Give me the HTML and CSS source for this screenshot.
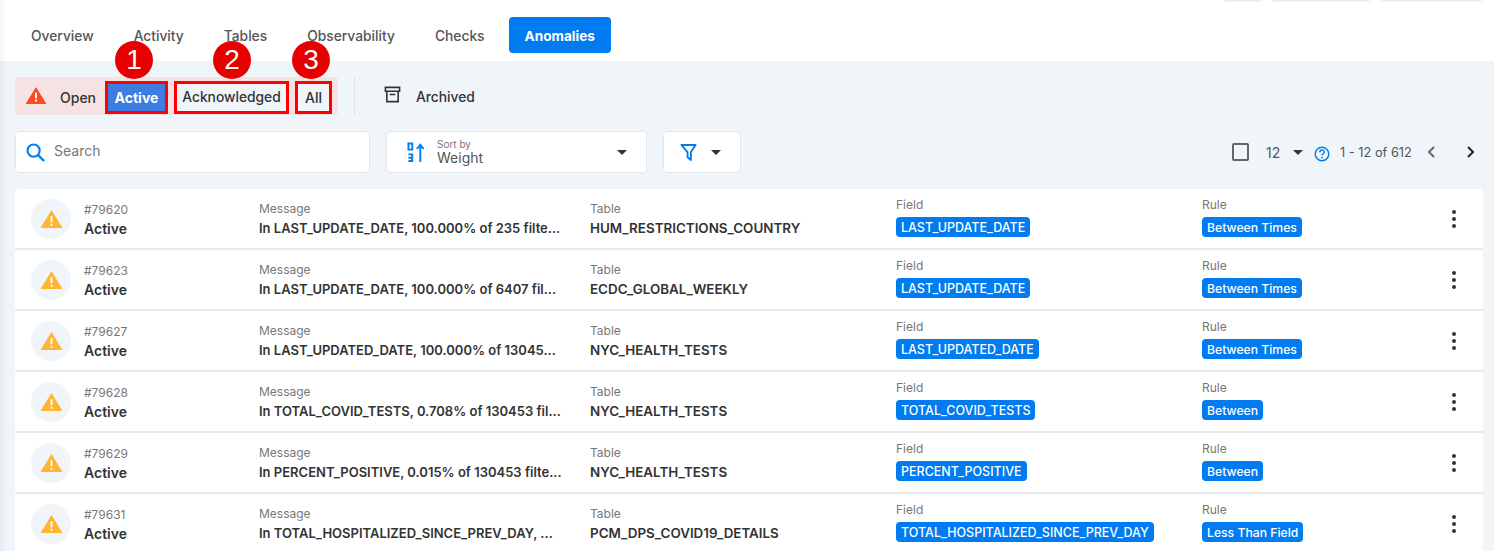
FILE: index.html
```html
<!DOCTYPE html>
<html lang="en">
<head>
  <meta charset="UTF-8">
  <meta name="viewport" content="width=device-width, initial-scale=1.0">
  <title>Anomalies</title>
  <link rel="stylesheet" href="styles.css">
</head>
<body>

<section class="page">
  <div class="top-actions">
    <span class="stub stub-a"></span>
    <span class="stub stub-b"></span>
    <span class="stub stub-c"></span>
  </div>

  <nav class="tabs">
    <div class="tab">Overview</div>
    <div class="tab">Activity</div>
    <div class="tab">Tables</div>
    <div class="tab">Observability</div>
    <div class="tab">Checks</div>
    <div class="tab tab-active">Anomalies</div>
  </nav>

  <main class="content">
    <div class="status-bar">
      <div class="status-group">
        <svg class="open-icon" viewBox="0 0 20 17" aria-hidden="true"><path d="M10 .8 19.600 16.500H.4Z" fill="#fb4c1d" stroke="#fb4c1d" stroke-linejoin="round"/><path d="M9 5.800h2v5.400H9zM9 12.400h2v2H9z" fill="#fff"/></svg>
        <span class="status-open">Open</span>
        <div class="status-btn status-active mark">Active</div>
        <div class="status-btn status-ack mark">Acknowledged</div>
        <div class="status-btn status-all mark">All</div>
      </div>
      <div class="divider"></div>
      <div class="archived">
        <svg class="archive-icon" viewBox="0 0 18 18" aria-hidden="true"><path d="M1.500 1.500h15v4h-15zM3 5.500v11h12v-11M6 9h6" fill="none" stroke="#333" stroke-width="1.700"/></svg>
        <span class="archived-text">Archived</span>
      </div>
      <span class="callout callout-1">1</span>
      <span class="callout callout-2">2</span>
      <span class="callout callout-3">3</span>
    </div>

    <div class="toolbar">
      <div class="search box">
        <svg class="search-icon" viewBox="0 0 20 20" aria-hidden="true"><circle cx="8" cy="8" r="6.400" fill="none" stroke="#007bf0" stroke-width="2.200"/><path d="m12.500 12.500 6.500 6.500" stroke="#007bf0" stroke-width="2.400"/></svg>
        <span class="search-text">Search</span>
      </div>
      <div class="sort box">
        <svg class="sort-icon" viewBox="0 0 20 21" aria-hidden="true"><path d="M1.500 1h4v6.500h-4zM1.500 12.500h4v3.500h-4M5.500 12.500v7h-4" fill="none" stroke="#007bf0" stroke-width="2"/><path d="M14 20.500V3M10.400 6.800 14 2.300l3.600 4.500" fill="none" stroke="#007bf0" stroke-width="2"/></svg>
        <div class="sort-text">
          <div class="sort-label">Sort by</div>
          <div class="sort-value">Weight</div>
        </div>
        <span class="caret"></span>
      </div>
      <div class="filter box">
        <svg class="filter-icon" viewBox="0 0 18 19" aria-hidden="true"><path d="M1.500 1.500h15L11.500 9v8.500l-3.500-3V9Z" fill="none" stroke="#007bf0" stroke-width="2" stroke-linejoin="round"/></svg>
        <span class="caret"></span>
      </div>
      <div class="pager">
        <span class="checkbox"></span>
        <span class="page-size">12</span>
        <span class="caret"></span>
        <svg class="help-icon" viewBox="0 0 16 16" aria-hidden="true"><circle cx="8" cy="8" r="6.800" fill="none" stroke="#007bf0" stroke-width="1.400"/><path d="M5.800 6.300c0-3 4.500-3 4.500-.2 0 1.700-2.300 1.700-2.300 3.500" fill="none" stroke="#007bf0" stroke-width="1.400"/><circle cx="8" cy="11.600" r=".9" fill="#007bf0"/></svg>
        <span class="page-range">1 - 12 of 612</span>
        <svg class="chev chev-prev" viewBox="0 0 10 14" aria-hidden="true"><path d="M8 2 3 7l5 5" fill="none" stroke="#666" stroke-width="2"/></svg>
        <svg class="chev chev-next" viewBox="0 0 10 14" aria-hidden="true"><path d="m2 2 5 5-5 5" fill="none" stroke="#222" stroke-width="2"/></svg>
      </div>
    </div>

    <div class="list" id="list"></div>
  </main>
</section>

<script>
  const rows = [
    ['#79620', 'In LAST_UPDATE_DATE, 100.000% of 235 filte...', 'HUM_RESTRICTIONS_COUNTRY', 'LAST_UPDATE_DATE', 'Between Times'],
    ['#79623', 'In LAST_UPDATE_DATE, 100.000% of 6407 fil...', 'ECDC_GLOBAL_WEEKLY', 'LAST_UPDATE_DATE', 'Between Times'],
    ['#79627', 'In LAST_UPDATED_DATE, 100.000% of 13045...', 'NYC_HEALTH_TESTS', 'LAST_UPDATED_DATE', 'Between Times'],
    ['#79628', 'In TOTAL_COVID_TESTS, 0.708% of 130453 fil...', 'NYC_HEALTH_TESTS', 'TOTAL_COVID_TESTS', 'Between'],
    ['#79629', 'In PERCENT_POSITIVE, 0.015% of 130453 filte...', 'NYC_HEALTH_TESTS', 'PERCENT_POSITIVE', 'Between'],
    ['#79631', 'In TOTAL_HOSPITALIZED_SINCE_PREV_DAY, ...', 'PCM_DPS_COVID19_DETAILS', 'TOTAL_HOSPITALIZED_SINCE_PREV_DAY', 'Less Than Field']
  ];

  // Build the anomaly rows
  const list = document.getElementById('list');
  rows.forEach(r => {
    const row = document.createElement('div');
    row.className = 'row';
    row.innerHTML = `
      <div class="avatar"><svg viewBox="0 0 24 20" aria-hidden="true"><path d="M12 .5 23.500 19.500H.5Z" fill="#ffb432"/><path d="M11 7h2v6.500h-2zM11 15h2v2h-2z" fill="#fff"/></svg></div>
      <div class="cell-id"><div class="anomaly-id">${r[0]}</div><div class="anomaly-status">Active</div></div>
      <div class="cell"><div class="label">Message</div><div class="value value-msg">${r[1]}</div></div>
      <div class="cell"><div class="label">Table</div><div class="value value-table">${r[2]}</div></div>
      <div class="cell cell-chip"><div class="label">Field</div><span class="chip chip-field">${r[3]}</span></div>
      <div class="cell cell-chip"><div class="label">Rule</div><span class="chip chip-rule">${r[4]}</span></div>
      <div class="menu"><i></i><i></i><i></i></div>`;
    list.appendChild(row);
  });
</script>

</body>
</html>
```

FILE: styles.css
```css
* {
  box-sizing: border-box;
}

html, body {
  margin: 0;
  height: 100%;
  overflow: hidden;
}

body {
  font-family: Inter, "Noto Sans", sans-serif;
  color: #333;
  background-color: #f0f5fa;
}

.page {
  position: relative;
  height: 551px;
  overflow: hidden;
}

/* faint shadow from the sidebar that is out of shot */
.page::before {
  content: "";
  position: absolute;
  top: 0;
  bottom: 0;
  left: 0;
  width: 6px;
  background: linear-gradient(to right, rgba(0, 0, 0, 0.04), transparent);
}

/* buttons cut off by the top of the shot */
.top-actions {
  position: absolute;
  top: -4px;
  left: 0;
  width: 100%;
}

.stub {
  position: absolute;
  top: 0;
  height: 4px;
  border-radius: 3px;
  box-shadow: 0 0 3px rgba(0, 0, 0, 0.25);
}

.stub-a { left: 1224px; width: 38px; }
.stub-b { left: 1272px; width: 98px; }
.stub-c { left: 1381px; width: 101px; }

.tabs {
  display: flex;
  align-items: center;
  gap: 8px;
  height: 61px;
  padding: 9px 0 0 15px;
  background-color: #fff;
}

.tab {
  padding: 0 16px;
  height: 36px;
  line-height: 38px;
  font-size: 13.8px;
  font-weight: 500;
  color: #555;
  border-radius: 4px;
}

.tab-active {
  background-color: #007bf0;
  color: #fff;
  font-size: 13.6px;
  font-weight: 700;
}

.content {
  padding: 16px 11px 0 15px;
}

.status-bar {
  position: relative;
  display: flex;
  align-items: center;
  height: 38px;
}

.status-group {
  display: flex;
  align-items: center;
  width: 323px;
  height: 38px;
  padding-top: 3px;
  background-color: #f4e3e2;
  border-radius: 4px;
}

.open-icon {
  width: 20px;
  height: 17px;
  margin: -5px 0 0 11px;
}

.status-open {
  margin-left: 14px;
  width: 45px;
  font-size: 14px;
  font-weight: 500;
}

.status-btn {
  height: 33px;
  line-height: 27px;
  font-size: 14px;
  font-weight: 500;
  text-align: center;
}

.mark {
  border: 3px solid #f00;
}

.status-active {
  width: 63px;
  background-color: #3d7ce3;
  color: #fff;
  font-weight: 700;
}

.status-ack {
  width: 115px;
  margin-left: 6px;
  font-size: 13.8px;
  background-color: #f0f5fa;
}

.status-all {
  width: 37px;
  margin-left: 6px;
  background-color: #f0f5fa;
}

.divider {
  width: 1px;
  height: 38px;
  margin-left: 16px;
  background-color: #dde1e6;
}

.archived {
  display: flex;
  align-items: center;
  gap: 15px;
  margin-left: 29px;
  font-size: 13.8px;
  font-weight: 500;
}

.archived-text {
  margin-top: 2px;
}

.archive-icon {
  width: 17px;
  height: 17px;
  margin-top: -4px;
}

.callout {
  position: absolute;
  top: -36px;
  width: 38px;
  height: 38px;
  border-radius: 50%;
  background-color: #e60000;
  color: #fff;
  font: 400 28px/38px "Liberation Sans", sans-serif;
  text-align: center;
}

.callout-1 { left: 100px; }
.callout-2 { left: 198px; }
.callout-3 { left: 277px; }

.toolbar {
  display: flex;
  align-items: center;
  gap: 16px;
  margin-top: 16px;
}

.box {
  display: flex;
  align-items: center;
  height: 42px;
  background-color: #fff;
  border: 1px solid #e3e6ea;
  border-radius: 4px;
}

.search {
  width: 355px;
  padding-left: 10px;
  gap: 9px;
  font-size: 14px;
  color: #777;
}

.search-icon {
  width: 19px;
  height: 19px;
}

.search-text {
  margin-top: -4px;
}

.sort {
  width: 261px;
  padding-left: 20px;
}

.sort-icon {
  width: 19px;
  height: 21px;
}

.sort-text {
  margin-left: 11px;
  flex-grow: 1;
}

.sort-label {
  font-size: 10px;
  line-height: 12px;
  color: #777;
}

.sort-value {
  margin-top: -1px;
  font-size: 14px;
  line-height: 17px;
  color: #555;
}

.caret {
  width: 0;
  height: 0;
  border-left: 5.500px solid transparent;
  border-right: 5.500px solid transparent;
  border-top: 5px solid #333;
}

.sort .caret {
  margin-right: 19px;
}

.filter {
  width: 78px;
  padding-left: 16px;
  gap: 14px;
}

.filter-icon {
  width: 17px;
  height: 19px;
}

.pager {
  display: flex;
  align-items: center;
  margin-left: auto;
  font-size: 14px;
  color: #555;
}

.checkbox {
  width: 17px;
  height: 18px;
  border: 2px solid #666;
  border-radius: 2px;
}

.page-size {
  margin-left: 17px;
  width: 27px;
}

.help-icon {
  width: 16px;
  height: 16px;
  margin: 3px 0 0 11px;
}

.page-range {
  margin-left: 10px;
  width: 80px;
  font-size: 12.800px;
  white-space: nowrap;
}

.chev {
  width: 10px;
  height: 14px;
}

.chev-prev {
  margin-left: 6px;
}

.chev-next {
  margin: 0 7px 0 30px;
}

.list {
  margin-top: 16px;
  background-color: #fff;
  border-radius: 4px 4px 0 0;
}

.row {
  display: grid;
  grid-template-columns: 40px 188px 331px 306px 306px 1fr 28px;
  align-items: start;
  height: 61px;
  padding: 10px 15px 0 16px;
  border-bottom: 2px solid #e8eaec;
}

.avatar {
  display: flex;
  align-items: center;
  justify-content: center;
  width: 40px;
  height: 40px;
  border-radius: 50%;
  background-color: #f0f5fa;
}

.avatar svg {
  width: 23px;
  height: 20px;
  margin-top: -1px;
}

.cell-id {
  padding: 2px 0 0 13px;
}

.anomaly-id {
  font-size: 12px;
  line-height: 18px;
  color: #777;
}

.anomaly-status {
  margin-top: 0;
  font-size: 14px;
  line-height: 20px;
  font-weight: 600;
}

.cell {
  margin-top: 1px;
}

.label {
  font-size: 12px;
  line-height: 18px;
  color: #777;
}

.value {
  font-size: 13px;
  line-height: 20px;
  font-weight: 600;
  white-space: nowrap;
}

.value-table {
  font-size: 13.400px;
}

.cell-chip {
  margin-top: -3px;
}

.chip {
  display: inline-block;
  margin-top: 3px;
  padding: 0 5px;
  height: 20px;
  line-height: 21px;
  font-weight: 500;
  color: #fff;
  background-color: #007bf0;
  border-radius: 4px;
  white-space: nowrap;
}

.chip-field {
  font-size: 12.500px;
}

.chip-rule {
  font-size: 12.200px;
}

.menu {
  display: flex;
  flex-direction: column;
  align-items: center;
  gap: 3px;
  width: 28px;
  margin-top: 11px;
}

.menu i {
  width: 4px;
  height: 4px;
  border-radius: 50%;
  background-color: #333;
}
```
